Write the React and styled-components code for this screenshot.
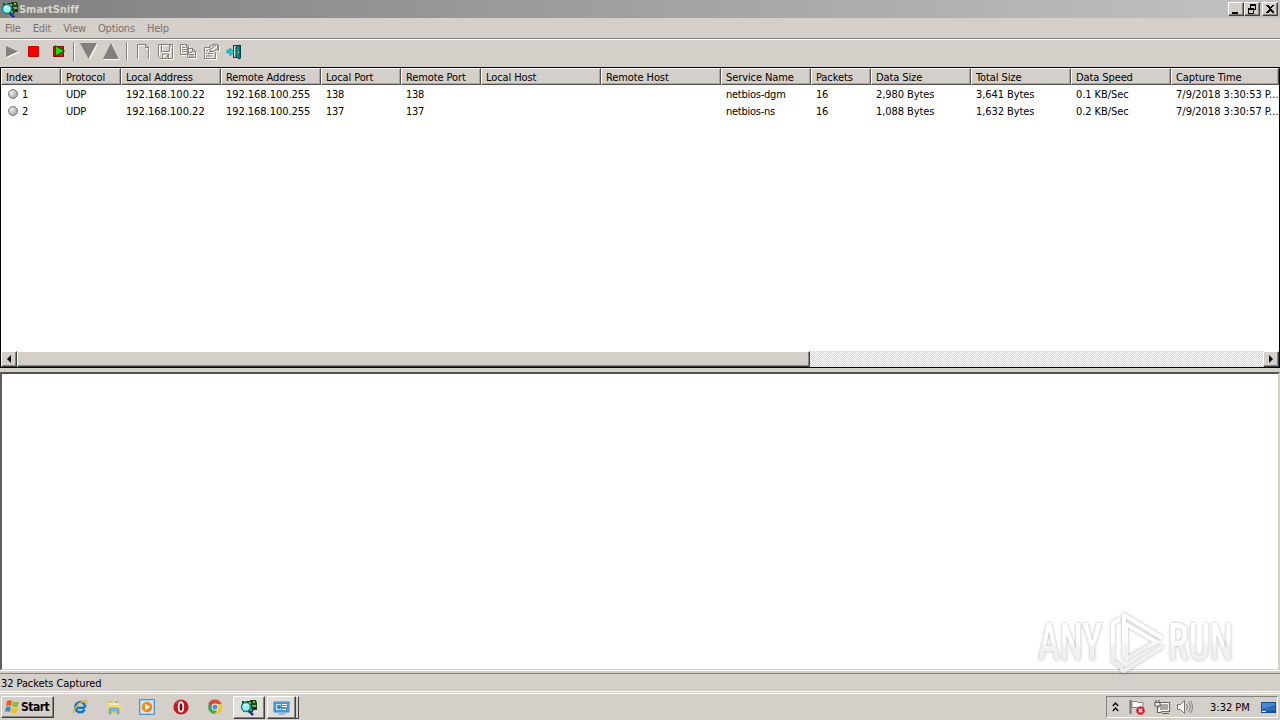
import React from "react";
import styled, { createGlobalStyle, css } from "styled-components";

const face = "#d4cfc9";
const Global = createGlobalStyle`
  * { box-sizing: border-box; }
  body { margin: 0; background: ${face}; overflow: hidden; }
`;
const raised = css`
  border: 1px solid;
  border-color: #fff #404040 #404040 #fff;
  box-shadow: inset -1px -1px 0 #878480;
`;

const Desktop = styled.div`
  width: 1280px; height: 720px; position: relative; overflow: hidden;
  display: flex; flex-direction: column; background: ${face}; color: #000;
  font: 11px "DejaVu Sans Condensed", "DejaVu Sans", sans-serif;
  font-stretch: condensed; letter-spacing: -0.25px; white-space: nowrap;
`;
const Label = styled.span`letter-spacing: ${(p) => p.$ls ?? -0.25}px;`;

const TitleBar = styled.header`
  height: 18px; flex: none; display: flex; align-items: center; padding: 0 2px 0 1px;
  background: linear-gradient(90deg, #808080, #c2c2c1);
  color: #d8d4ce; font-weight: bold;
`;
const Title = styled.span`margin-left: 0; flex: 1; letter-spacing: -0.02px;`;
const WinButton = styled.button`
  width: 16px; height: 14px; padding: 0; background: ${face}; ${raised}
  margin-left: ${(p) => (p.$gap ? 2 : 0)}px; display: flex;
  svg { display: block; }
`;
const MenuBar = styled.nav`
  height: 21px; flex: none; display: flex; padding: 4px 0 0 5px; gap: 12px;
  color: #77736f; border-bottom: 1px solid #85817d; line-height: 13px;
`;
const ToolBar = styled.div`
  height: 28px; flex: none; display: flex; align-items: center; padding: 0 0 4px 1px;
  border-top: 1px solid #fff;
  svg { display: block; flex: none; }
`;
const Tool = styled.span`width: ${(p) => p.$w}px; display: flex; justify-content: center; flex: none;`;
const Divider = styled.i`width: 2px; height: 19px; background: #85817d; border-right: 1px solid #fff; flex: none;`;

const ListView = styled.section`
  height: 301px; flex: none; border: 1px solid #000; background: #fff;
  display: flex; flex-direction: column;
`;
const HeaderRow = styled.div`display: flex; height: 17px; flex: none; overflow: hidden;`;
const HeaderCell = styled.div`
  width: ${(p) => p.$w}px; flex: none; background: ${face}; padding: 2px 0 0 4px; line-height: 13px;
  border: 1px solid; border-color: #fff #55524f #55524f #fff; box-shadow: inset -1px -1px 0 #aaa5a0;
  overflow: hidden; letter-spacing: -0.1px;
`;
const Row = styled.div`display: flex; height: 17px; flex: none; align-items: center; overflow: hidden;`;
const Cell = styled.div`
  width: ${(p) => p.$w}px; flex: none; padding-left: 5px; display: flex; align-items: center; gap: 4px;
  overflow: hidden; line-height: 15px;
`;
const Rows = styled.div`flex: 1; padding-top: 1px;`;
const Bullet = styled.i`
  width: 10px; height: 10px; margin: 0 0 2px 2px; border-radius: 50%; border: 1px solid #777;
  background: radial-gradient(circle at 35% 35%, #eee, #aaa 70%);
`;
const ScrollBar = styled.div`
  height: 16px; flex: none; display: flex;
  background: repeating-conic-gradient(${face} 0 25%, #fff 0 50%) 0 0 / 2px 2px;
`;
const Arrow = styled.button`
  width: 16px; padding: 0 1px 0 0; background: ${face}; ${raised} display: flex; align-items: center; justify-content: center;
`;
const Thumb = styled.div`width: 793px; background: ${face}; ${raised}`;
const Track = styled.div`flex: 1;`;

const Detail = styled.section`
  height: 298px; flex: none; margin-top: 4px; background: #fff; border: solid;
  border-width: 2px 2px 1px 2px; border-color: #55524f ${face} ${face} #605d5a;
`;
const StatusBar = styled.footer`
  height: 19px; flex: none; margin-top: 1px; border-bottom: 1px solid #fff; border-top: 1px solid #85817d;
  padding: 2px 1px 0; line-height: 15px; letter-spacing: -0.08px;
`;
const DetailEdge = styled.div`height: 2px; flex: none; border-top: 1px solid #fff;`;
const TaskBar = styled.footer`
  flex: 1; margin-top: 1px; border-top: 1px solid #fff; display: flex; align-items: flex-start; padding: 2px 2px 0 1px;
  svg { display: block; flex: none; }
`;
const StartButton = styled.button`
  width: 53px; height: 22px; padding: 0 0 0 3px; background: ${face}; ${raised}
  display: flex; align-items: center; gap: 1px; color: #000;
  font: bold 12px "DejaVu Sans Condensed", sans-serif; letter-spacing: -0.5px;
`;
const Quick = styled.div`display: flex; margin: 3px 0 0 18px; gap: 17.7px; width: 161px; flex: none;`;
const TaskButton = styled.button`
  width: ${(p) => p.$w}px; height: 23px; padding: 0; background: #e2deda; ${raised}
  display: flex; justify-content: center; align-items: center; margin-right: 2px;
`;
const Stack = styled.i`
  width: 3px; height: 23px; margin-left: -2px; background: ${face};
  border-top: 1px solid #fff; border-right: 1px solid #404040; border-bottom: 1px solid #404040;
`;
const Tray = styled.div`
  margin-left: auto; width: 172px; height: 22px; border: 1px solid; border-color: #85817d #fff #fff #85817d;
  display: flex; align-items: center; padding-left: 5px;
`;
const Clock = styled.span`margin-left: 9px; width: 51px; letter-spacing: 0;`;
const Watermark = styled.svg`
  position: absolute; left: 1030px; top: 602px; overflow: visible; pointer-events: none;
  filter: drop-shadow(0 0 1.5px rgba(0,0,0,.3));
`;

const SniffIcon = () => (
  <svg width="18" height="17" viewBox="0 0 18 17">
    <path d="M2 2h8V1h6l1 3v7h-3l-2 3H9L7 11H2z" fill="#164b18" />
    <path d="M8 3h3v2H9zM13 2h2v2h-2zM12 6h4v2h-3zM10 10h2v2h-2zM4 2h2v1H4z" fill="#83af55" />
    <path d="M11 5h1v1h-1zM14 9h2v1h-2z" fill="#000" />
    <circle cx="6" cy="8" r="4.5" fill="#9df1ee" stroke="#09848a" strokeWidth="1.4" />
    <path d="M4 6.5l2-1.5" stroke="#fff" strokeWidth="1.5" />
    <path d="M9 12l4 4" stroke="#000b80" strokeWidth="2.4" />
    <path d="M9.5 12l3 3" stroke="#43a9e8" strokeWidth=".8" />
  </svg>
);
const winPaths = {
  min: <path d="M3 9h6v2H3z" />,
  restore: <path fillRule="evenodd" d="M5 1h6v6H9v4H3V5h2zM6 3v2h3v1h1V3zM4 7v3h4V7z" />,
  close: <path d="M3 2h2l2 2 2-2h2v1L8 5.5V6l3 3v1H9L7 8l-2 2H3V9l3-3v-.5L3 3z" />,
};
const WinIcon = ({ kind }) => <svg width="14" height="12" shapeRendering="crispEdges">{winPaths[kind]}</svg>;

const tri = { play: "M3 3l12 5.5L3 14z", down: "M0 0h17L8.5 16z", up: "M0 16h16L8 0z" };
const Tri = ({ kind }) => (
  <svg width="18" height="17" viewBox="0 0 18 17">
    <path d={tri[kind]} transform="translate(1 1)" fill="#fff" />
    <path d={tri[kind]} fill="#827f7c" />
  </svg>
);
const etched = {
  page: "M3.5 1.5h8l3 3v11M3.5 1.5v14M11.5 1.5v3h3",
  save: "M1.5 1.5h14v14h-12l-2-2zM4.5 1.5v7h8v-7M5.5 15v-4h6v4M10.5 12v2M13 3h1",
  copy: "M.5 1.5h6l2 2v8h-8zM6.5 1.5v3h2M2 4.5h3M2 6.5h5M2 8.5h5M7.5 5.5h5l3 3v6h-8zM12.5 5.5v3h3M9 9.5h3M9 11.5h5M9 13h5",
  props: "M7.5 4.5h-6v11h11V9M4 7.5h1M6 8.5h4M3 10.5h1M5 10.5h5M3 13h6M5.5 4.5l4-3h5v5l-5 2-3-2 4-2M9 3h4M15.5 2v6",
};
const Etched = ({ kind }) => (
  <svg width="18" height="18" fill="none">
    <path d={etched[kind]} transform="translate(1 1)" stroke="#fff" />
    <path d={etched[kind]} stroke="#85817d" />
  </svg>
);
const StopIcon = () => <svg width="12" height="12"><path d="M.5.5h10v10H.5z" fill="#f00" stroke="#c80905" /></svg>;
const RestartIcon = () => (
  <svg width="14" height="13"><path d="M1.5 1.5h10v10h-10z" fill="#e51108" stroke="#8c0905" /><path d="M3.5.8l9 5.2-9 5z" fill="#0be800" stroke="#16451d" /></svg>
);
const ExitIcon = () => (
  <svg width="17" height="16">
    <path d="M7 1h8v13H7z" fill="#173c3d" /><path d="M8 2h3v11H8z" fill="#d4cfc9" />
    <path d="M10 3l4-2v14l-4-2z" fill="#079594" stroke="#083c40" />
    <path d="M1 6h3V4l4 4-4 4V9H1z" fill="#14cfda" stroke="#087b85" strokeWidth=".6" /><path d="M12 8h1v1h-1z" fill="#fff" />
  </svg>
);
const ArrowIcon = ({ right }) => <svg width="4" height="8"><path d={right ? "M0 0l4 4-4 4z" : "M4 0L0 4l4 4z"} /></svg>;

const WindowsIcon = () => (
  <svg width="15" height="15" viewBox="0 0 15 15">
    <path d="M2 1q3-1.5 5 0L6 6Q4 5 1 6z" fill="#e85b1c" /><path d="M8 1.5q3 1.3 6 0l-1.2 5Q10 8 7 6z" fill="#8abd35" />
    <path d="M1 7q3-1 5 0l-1 5q-2-1.5-5 0z" fill="#3c87ce" /><path d="M7 7.5q3 1.3 6 0l-1.3 5q-3 1.4-6 0z" fill="#f7bd22" />
  </svg>
);
const IeIcon = () => (
  <svg width="16" height="16" fill="none">
    <path d="M13 8.8H4.5M12.6 10.6A5 5 0 1 1 13.2 8.5" stroke="#1778c5" strokeWidth="2.6" />
    <path d="M5 5.5Q7 3 10 4" stroke="#6bc2f2" strokeWidth="1" />
    <path d="M2 14.5Q0 13 4 8T14 1.5q2 .5-.5 4" stroke="#e5b52b" strokeWidth="1.3" />
  </svg>
);
const FolderIcon = () => (
  <svg width="16" height="16">
    <path d="M1 2h6l1 2h6v10H1z" fill="#e9c75f" /><path d="M2 4h11v9H2z" fill="#f9eaaa" /><path d="M1 6h14v7H1z" fill="#f4d873" />
    <path d="M3 15v-5q0-1 1-1h8q1 0 1 1v5h-2v-3H5v3z" fill="#78b9df" stroke="#4b91bc" strokeWidth=".5" />
    <path d="M9 3h3" stroke="#66a969" />
  </svg>
);
const PlayerIcon = () => (
  <svg width="16" height="16"><path d="M.5.5h15v15H.5z" fill="#9ccbee" stroke="#5893c2" /><path d="M2 2h12v12H2z" fill="#d7e9f7" />
    <circle cx="8" cy="8" r="5.3" fill="#f28a17" /><path d="M6.2 4.8L11 8l-4.8 3.2z" fill="#fff" /></svg>
);
const OperaIcon = () => (
  <svg width="16" height="16"><circle cx="8" cy="8" r="7.6" fill="#bb1c20" /><path d="M2 4Q5 0 10 1L5 5z" fill="#dc5350" opacity=".6" />
    <ellipse cx="8" cy="8" rx="2.3" ry="4.7" fill="#7b080d" stroke="#fff" strokeWidth="1.7" /></svg>
);
const ChromeIcon = () => (
  <svg width="16" height="16"><circle cx="8" cy="8" r="7" fill="#42a554" />
    <path d="M1.5 4.5A7 7 0 0 1 14.4 5H8L5 9z" fill="#df4738" /><path d="M14.4 5A7 7 0 0 1 7.5 15L11 9 8 5z" fill="#f5c72e" />
    <circle cx="8" cy="8" r="3.4" fill="#fff" /><circle cx="8" cy="8" r="2.6" fill="#4d8cdd" /></svg>
);
const PanelIcon = () => (
  <svg width="17" height="16"><rect x=".5" y="1.5" width="16" height="11" rx="1" fill="#4e94cf" stroke="#82b5df" />
    <path d="M3 4h5v6H3z" fill="#b9e0f7" /><path d="M9 4.5h5M9 6.5h5M9 9.5h4" stroke="#fff" /><circle cx="6" cy="7" r="2" fill="#397cab" />
    <path d="M6 13h5l2 2H4z" fill="#a6bbcc" /></svg>
);
const FlagIcon = () => (
  <svg width="17" height="17" fill="none"><path d="M1.5 1v14" stroke="#77736f" strokeWidth="2" /><path d="M3 2.5h5l1 1h5v7H9l-1-2H3z" fill="#fff" stroke="#85817d" />
    <circle cx="11.5" cy="11.5" r="4.3" fill="#d51e2c" /><path d="M9.8 9.8l3.4 3.4m0-3.4l-3.4 3.4" stroke="#fff" strokeWidth="1.4" /></svg>
);
const NetIcon = () => (
  <svg width="17" height="16" fill="none"><path d="M4.5 3.5h11v9h-11zM8 14.5h7" fill="#fff" stroke="#6d6965" strokeWidth="1.2" />
    <path d="M6 5h8v6H6z" fill="#aaa6a2" /><path d="M1 3.5h5v3.500H1zM2 1v2M5 1v2M3.500 7v6.500h4" fill="#fff" stroke="#66625e" strokeWidth="1.2" /></svg>
);
const SoundIcon = () => (
  <svg width="18" height="16" fill="none"><path d="M1.5 5.500h3l4-4v13l-4-4h-3z" fill="#fff" stroke="#77736f" /><path d="M10.500 5q2 3 0 6M12.500 3q3.500 5 0 10M14.500 1.500q4 6.500 0 13" stroke="#85817d" /></svg>
);
const ScreenIcon = () => (
  <svg width="16" height="15"><path d="M0 2h15v11H0z" fill="#184f9b" /><path d="M1 3h13v8H1z" fill="#2c68b8" /><path d="M1 3h13v2L1 9z" fill="#4a86d2" /><path d="M1 11h4v1H1z" fill="#fff" /></svg>
);

const columns = [
  ["Index", 60], ["Protocol", 60], ["Local Address", 100, 0], ["Remote Address", 100, -0.05], ["Local Port", 80],
  ["Remote Port", 80], ["Local Host", 120], ["Remote Host", 120], ["Service Name", 90], ["Packets", 60],
  ["Data Size", 100, -0.08], ["Total Size", 100, -0.08], ["Data Speed", 100, -0.08], ["Capture Time", 108, 0],
];
const rows = [
  ["1", "UDP", "192.168.100.22", "192.168.100.255", "138", "138", "", "", "netbios-dgm", "16", "2,980 Bytes", "3,641 Bytes", "0.1 KB/Sec", "7/9/2018 3:30:53 P..."],
  ["2", "UDP", "192.168.100.22", "192.168.100.255", "137", "137", "", "", "netbios-ns", "16", "1,088 Bytes", "1,632 Bytes", "0.2 KB/Sec", "7/9/2018 3:30:57 P..."],
];

export default function App() {
  return (
    <Desktop>
      <Global />
      <TitleBar>
        <SniffIcon /><Title>SmartSniff</Title>
        <WinButton><WinIcon kind="min" /></WinButton>
        <WinButton><WinIcon kind="restore" /></WinButton>
        <WinButton $gap><WinIcon kind="close" /></WinButton>
      </TitleBar>
      <MenuBar>{["File", "Edit", "View", "Options", "Help"].map((m) => <Label $ls={-0.18} key={m}>{m}</Label>)}</MenuBar>
      <ToolBar>
        <Tool $w={22}><Tri kind="play" /></Tool>
        <Tool $w={22}><StopIcon /></Tool>
        <Tool $w={28}><RestartIcon /></Tool>
        <Divider />
        <Tool $w={27}><Tri kind="down" /></Tool>
        <Tool $w={20}><Tri kind="up" /></Tool>
        <Tool $w={4} /><Divider />
        <Tool $w={3} />
        {["page", "save", "copy", "props"].map((k) => <Tool $w={23} key={k}><Etched kind={k} /></Tool>)}
        <Tool $w={23}><ExitIcon /></Tool>
      </ToolBar>
      <ListView>
        <HeaderRow>{columns.map(([name, w]) => <HeaderCell key={name} $w={w}>{name}</HeaderCell>)}</HeaderRow>
        <Rows>
          {rows.map((row) => (
            <Row key={row[0]}>
              {row.map((value, i) => <Cell key={i} $w={columns[i][1]}>{i === 0 && <Bullet />}<Label $ls={columns[i][2]}>{value}</Label></Cell>)}
            </Row>
          ))}
        </Rows>
        <ScrollBar><Arrow><ArrowIcon /></Arrow><Thumb /><Track /><Arrow><ArrowIcon right /></Arrow></ScrollBar>
      </ListView>
      <Detail />
      <DetailEdge />
      <StatusBar>32 Packets Captured</StatusBar>
      <TaskBar>
        <StartButton><WindowsIcon />Start</StartButton>
        <Quick><IeIcon /><FolderIcon /><PlayerIcon /><OperaIcon /><ChromeIcon /></Quick>
        <TaskButton $w={32}><SniffIcon /></TaskButton>
        <TaskButton $w={29}><PanelIcon /></TaskButton><Stack />
        <Tray>
          <svg width="7" height="11" fill="none"><path d="M.8 4l2.700-3 2.700 3M.8 9l2.700-3 2.700 3" stroke="#000" strokeWidth="1.3" /></svg>
          <Tool $w={36}><FlagIcon /></Tool><Tool $w={14}><NetIcon /></Tool><Tool $w={32}><SoundIcon /></Tool>
          <Clock>3:32 PM</Clock><ScreenIcon />
        </Tray>
      </TaskBar>
      <Watermark width="210" height="74">
        <defs>
          <linearGradient id="fade" gradientUnits="userSpaceOnUse" x1="0" y1="10" x2="0" y2="70">
            <stop offset=".45" stopColor="#fff" /><stop offset=".6" stopColor="#f1f1f1" /><stop offset="1" stopColor="#ededed" />
          </linearGradient>
        </defs>
        <g fill="url(#fade)" fontFamily="Roboto, sans-serif" fontSize="52" fontWeight="500">
          <text x="8" y="58" textLength="64" lengthAdjust="spacingAndGlyphs">ANY</text>
          <text x="138" y="58" textLength="65" lengthAdjust="spacingAndGlyphs">RUN</text>
        </g>
        <path d="M90 17l-7 4v38l10 7M94 57V13l38 23M96 60V22l30 18-30 17M90 67l4 2 39-25" fill="none" stroke="url(#fade)" strokeWidth="4" />
      </Watermark>
    </Desktop>
  );
}
